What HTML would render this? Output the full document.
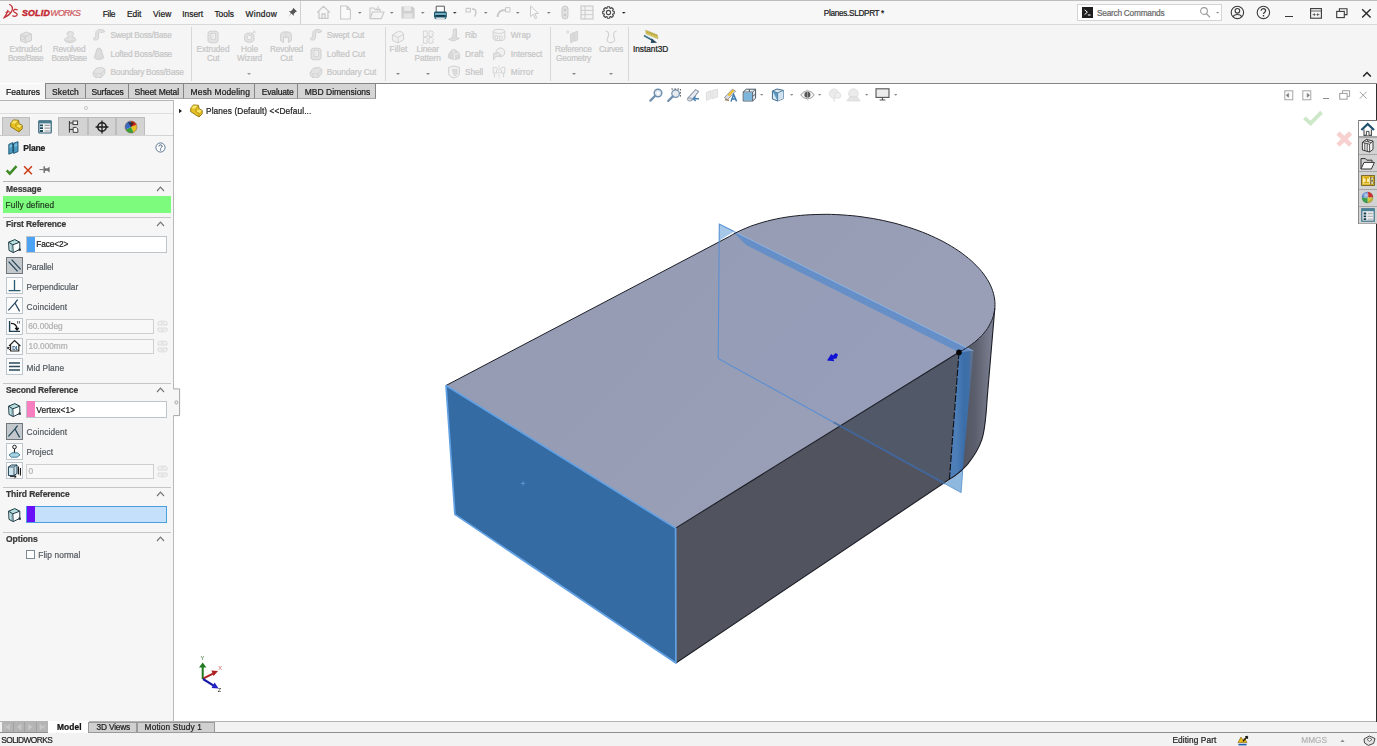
<!DOCTYPE html>
<html lang="en"><head><meta charset="utf-8"><title>Planes.SLDPRT - SOLIDWORKS</title>
<style>
html,body{margin:0;padding:0;background:#fff;}
body{width:1377px;height:746px;overflow:hidden;position:relative;font-family:"Liberation Sans",sans-serif;}
#app{position:absolute;left:0;top:0;width:1377px;height:746px;overflow:hidden;opacity:0.9999;}
.b{position:absolute;display:block;}
.t{position:absolute;white-space:nowrap;line-height:normal;display:block;-webkit-text-stroke:0.22px currentColor;}
</style></head>
<body><div id="app">
<div class="b" style="left:0.0px;top:0.0px;width:1377.0px;height:25.0px;background:#f7f7f7;"></div>
<div class="b" style="left:0.0px;top:0.0px;width:1377.0px;height:1.0px;background:#bdbdbd;"></div>
<div class="b" style="left:0.0px;top:24.0px;width:1377.0px;height:1.0px;background:#d9d9d9;"></div>
<svg class="b" style="left:3.0px;top:3.0px;" width="16" height="17" viewBox="0 0 16 17"><path d="M6.2 1.2 C8.5 2.2 10 4.2 9.2 7.0 C8.4 10 5.4 12.6 1.2 14.6 C3.2 11.6 4.6 9.2 5.0 6.8" fill="none" stroke="#c43038" stroke-width="1.25"/><path d="M2.6 9.6 C4.6 8.2 7.0 8.4 7.6 10.2" fill="none" stroke="#c43038" stroke-width="1.1"/><path d="M14.6 6.8 C12.6 5.8 10.4 6.4 10.6 8.2 C10.8 9.8 14.2 9.6 14.2 11.6 C14.2 13.4 11.4 13.8 9.4 12.6" fill="none" stroke="#c43038" stroke-width="1.3"/></svg>
<span class="t" id="t1" style="left:21.9px;top:8.34px;font-size:8.80px;color:#c3262f;letter-spacing:0.262px;font-weight:bold;font-style:italic;-webkit-text-stroke:0.45px #c3262f;">SOLID</span>
<span class="t" id="t2" style="left:50.3px;top:8.34px;font-size:8.80px;color:#cf5a60;letter-spacing:-0.667px;font-style:italic;">WORKS</span>
<span class="t" id="t3" style="left:102.7px;top:8.80px;font-size:8.40px;color:#1a1a1a;letter-spacing:-0.225px;">File</span>
<span class="t" id="t4" style="left:127.0px;top:8.80px;font-size:8.40px;color:#1a1a1a;letter-spacing:-0.059px;">Edit</span>
<span class="t" id="t5" style="left:153.0px;top:8.80px;font-size:8.40px;color:#1a1a1a;letter-spacing:0.071px;">View</span>
<span class="t" id="t6" style="left:182.3px;top:8.80px;font-size:8.40px;color:#1a1a1a;letter-spacing:-0.009px;">Insert</span>
<span class="t" id="t7" style="left:214.4px;top:8.80px;font-size:8.40px;color:#1a1a1a;letter-spacing:0.007px;">Tools</span>
<span class="t" id="t8" style="left:245.5px;top:8.80px;font-size:8.40px;color:#1a1a1a;letter-spacing:0.317px;">Window</span>
<svg class="b" style="left:287.0px;top:7.0px;" width="11" height="11" viewBox="0 0 11 11"><path d="M6.2 0.8 L10 4.6 L8.6 5 L6.6 7 L6.8 9 L4.4 6.6 L1 10 L4 6.2 L1.8 4 L3.8 4.2 L5.8 2.2 Z" fill="#555"/></svg>
<div class="b" style="left:300.0px;top:1.0px;width:1.0px;height:23.0px;background:#d0d0d0;"></div>
<svg class="b" style="left:316.0px;top:5.0px;" width="15" height="15" viewBox="0 0 15 15"><path d="M1 7.6 L7.5 1.4 L14 7.6 M3 6.6 V13.4 H12 V6.6 M6 13.4 V9 H9 V13.4" fill="none" stroke="#c9c9c9" stroke-width="1.3"/></svg>
<svg class="b" style="left:339.0px;top:5.0px;" width="13" height="15" viewBox="0 0 13 15"><path d="M1.6 1 H8 L11.4 4.4 V14 H1.6 Z M8 1 V4.4 H11.4" fill="#fafafa" stroke="#c9c9c9" stroke-width="1.1"/></svg>
<svg class="b" style="left:358.2px;top:11.6px;" width="3.6" height="2.3" viewBox="0 0 3.6 2.3"><path d="M0 0 H3.6 L1.8 1.8 Z" fill="#777"/></svg>
<svg class="b" style="left:369.0px;top:5.0px;" width="16" height="15" viewBox="0 0 16 15"><path d="M1 13.6 V3 H5 L6.4 4.6 H11 V7 M1 13.6 L3.6 7 H15 L12.4 13.6 Z" fill="#f4f4f4" stroke="#c9c9c9" stroke-width="1.1"/><path d="M9 1 V5 M7.4 3.6 L9 5.2 L10.6 3.6" fill="none" stroke="#c9c9c9" stroke-width="1"/></svg>
<svg class="b" style="left:390.2px;top:11.6px;" width="3.6" height="2.3" viewBox="0 0 3.6 2.3"><path d="M0 0 H3.6 L1.8 1.8 Z" fill="#777"/></svg>
<svg class="b" style="left:400.0px;top:5.0px;" width="16" height="15" viewBox="0 0 16 15"><path d="M1.4 1.4 H12.6 L14.6 3.4 V13.6 H1.4 Z" fill="#cfcfcf"/><rect x="4" y="1.4" width="7" height="4.6" fill="#e9e9e9"/><rect x="3.6" y="8.4" width="8.8" height="5.2" fill="#e4e4e4"/></svg>
<svg class="b" style="left:421.2px;top:11.6px;" width="3.6" height="2.3" viewBox="0 0 3.6 2.3"><path d="M0 0 H3.6 L1.8 1.8 Z" fill="#777"/></svg>
<svg class="b" style="left:432.5px;top:5.0px;" width="15" height="15" viewBox="0 0 15 15"><path d="M3.2 7 V1.2 H11.4 V7" fill="#fbfbfd" stroke="#5a5a5a" stroke-width="1"/><path d="M1 12.4 V8 C1 6.8 2 6.4 3 6.4 H11.6 C12.8 6.4 13.8 6.8 13.8 8 V12.4 Z" fill="#1d566c"/><path d="M2 9 H12.8" stroke="#a4dde6" stroke-width="1.3"/><path d="M3.4 10.8 H11.4" stroke="#0e3446" stroke-width="1.4"/><path d="M2.4 12.4 V14 M12.4 12.4 V14" stroke="#2a5a6c" stroke-width="1.4"/><path d="M2.4 14 H12.4" stroke="#9fb4bc" stroke-width="0.7"/></svg>
<svg class="b" style="left:453.2px;top:11.6px;" width="3.6" height="2.3" viewBox="0 0 3.6 2.3"><path d="M0 0 H3.6 L1.8 1.8 Z" fill="#333"/></svg>
<svg class="b" style="left:464.0px;top:6.0px;" width="15" height="13" viewBox="0 0 15 13"><path d="M2 2.4 H6.4 V6 M2 2.4 V6 H6.4" fill="none" stroke="#c9c9c9" stroke-width="1.1"/><path d="M8 3 C12 2.6 13.4 6.6 10.4 10.6" fill="none" stroke="#c9c9c9" stroke-width="1.5"/></svg>
<svg class="b" style="left:484.2px;top:11.6px;" width="3.6" height="2.3" viewBox="0 0 3.6 2.3"><path d="M0 0 H3.6 L1.8 1.8 Z" fill="#777"/></svg>
<svg class="b" style="left:496.0px;top:6.0px;" width="16" height="13" viewBox="0 0 16 13"><path d="M1.6 11 C1.6 5.4 6 3.4 10 4.4" fill="none" stroke="#c9c9c9" stroke-width="2"/><path d="M9.6 1.6 H14 V6 M9.6 1.6 V6 H14" fill="none" stroke="#c9c9c9" stroke-width="1"/></svg>
<svg class="b" style="left:516.2px;top:11.6px;" width="3.6" height="2.3" viewBox="0 0 3.6 2.3"><path d="M0 0 H3.6 L1.8 1.8 Z" fill="#777"/></svg>
<svg class="b" style="left:529.0px;top:5.0px;" width="11" height="15" viewBox="0 0 11 15"><path d="M1.6 1 L1.6 11.6 L4.2 9.2 L6.2 13.6 L7.8 12.8 L5.8 8.6 L9.4 8.4 Z" fill="#fafafa" stroke="#c9c9c9" stroke-width="1"/></svg>
<svg class="b" style="left:547.2px;top:11.6px;" width="3.6" height="2.3" viewBox="0 0 3.6 2.3"><path d="M0 0 H3.6 L1.8 1.8 Z" fill="#777"/></svg>
<svg class="b" style="left:561.0px;top:5.0px;" width="8" height="15" viewBox="0 0 8 15"><rect x="1" y="1" width="6" height="13" rx="3" fill="#e2e2e2" stroke="#c9c9c9" stroke-width="1"/><circle cx="4" cy="5" r="1.3" fill="#c9c9c9"/><circle cx="4" cy="10" r="1.3" fill="#c9c9c9"/></svg>
<svg class="b" style="left:580.0px;top:5.0px;" width="14" height="15" viewBox="0 0 14 15"><rect x="1" y="1" width="12" height="13" fill="#f3f3f3" stroke="#c9c9c9" stroke-width="1.1"/><path d="M5 1 V14 M1 5.4 H13 M1 9.6 H13" stroke="#c9c9c9" stroke-width="0.9"/></svg>
<svg class="b" style="left:601.3px;top:5.4px;" width="15" height="15" viewBox="0 0 15 15"><path d="M6.33 1.72 L8.67 1.72 L8.86 3.11 L9.65 3.43 L10.76 2.58 L12.42 4.24 L11.57 5.35 L11.89 6.14 L13.28 6.33 L13.28 8.67 L11.89 8.86 L11.57 9.65 L12.42 10.76 L10.76 12.42 L9.65 11.57 L8.86 11.89 L8.67 13.28 L6.33 13.28 L6.14 11.89 L5.35 11.57 L4.24 12.42 L2.58 10.76 L3.43 9.65 L3.11 8.86 L1.72 8.67 L1.72 6.33 L3.11 6.14 L3.43 5.35 L2.58 4.24 L4.24 2.58 L5.35 3.43 L6.14 3.11 Z" fill="none" stroke="#4a4a4a" stroke-width="1.15" stroke-linejoin="round"/><circle cx="7.5" cy="7.5" r="2.1" fill="none" stroke="#4a4a4a" stroke-width="1.1"/></svg>
<svg class="b" style="left:622.2px;top:11.6px;" width="3.6" height="2.3" viewBox="0 0 3.6 2.3"><path d="M0 0 H3.6 L1.8 1.8 Z" fill="#222"/></svg>
<span class="t" id="t9" style="left:823.8px;top:8.78px;font-size:8.20px;color:#1a1a1a;letter-spacing:-0.305px;">Planes.SLDPRT *</span>
<div class="b" style="left:1077.0px;top:4.0px;width:145.0px;height:17.0px;background:#fff;border:1px solid #d4d4d4;box-sizing:border-box;"></div>
<div class="b" style="left:1082.0px;top:7.0px;width:11.0px;height:10.5px;background:#1e1e1e;"></div>
<svg class="b" style="left:1082.0px;top:7.0px;" width="11" height="10.5" viewBox="0 0 11 10.5"><path d="M2.6 2.8 L5.4 5.2 L2.6 7.6 M5.8 8 H8.6" fill="none" stroke="#fff" stroke-width="1"/></svg>
<span class="t" id="t10" style="left:1097.0px;top:8.09px;font-size:8.30px;color:#6a6a6a;letter-spacing:-0.248px;">Search Commands</span>
<svg class="b" style="left:1199.0px;top:6.0px;" width="13" height="13" viewBox="0 0 13 13"><circle cx="5" cy="5" r="3.4" fill="none" stroke="#9a9a9a" stroke-width="1.1"/><path d="M7.4 7.6 L11 11.4" stroke="#9a9a9a" stroke-width="1.3"/></svg>
<svg class="b" style="left:1215.7px;top:11.5px;" width="3.2" height="2.1" viewBox="0 0 3.2 2.1"><path d="M0 0 H3.2 L1.6 1.6 Z" fill="#8a8a8a"/></svg>
<svg class="b" style="left:1230.0px;top:5.4px;" width="15" height="15" viewBox="0 0 15 15"><circle cx="7.4" cy="7.4" r="6.2" fill="none" stroke="#3c3c3c" stroke-width="1.1"/><circle cx="7.4" cy="5.8" r="2.3" fill="none" stroke="#3c3c3c" stroke-width="1.1"/><path d="M3.2 11.8 C4 8.8 10.8 8.8 11.6 11.8" fill="none" stroke="#3c3c3c" stroke-width="1.1"/></svg>
<svg class="b" style="left:1255.8px;top:5.4px;" width="15" height="15" viewBox="0 0 15 15"><circle cx="7.4" cy="7.4" r="6.2" fill="none" stroke="#3c3c3c" stroke-width="1.1"/><path d="M5.2 5.8 C5.2 3 9.8 3 9.6 5.8 C9.5 7.2 7.5 7.2 7.5 9" fill="none" stroke="#3c3c3c" stroke-width="1.3"/><rect x="6.8" y="10" width="1.4" height="1.5" fill="#3c3c3c"/></svg>
<div class="b" style="left:1285.0px;top:16.0px;width:8.0px;height:1.4px;background:#3a3a3a;"></div>
<svg class="b" style="left:1309.5px;top:7.5px;" width="12" height="11" viewBox="0 0 12 11"><rect x="0.6" y="0.6" width="10.8" height="9.6" fill="none" stroke="#3a3a3a" stroke-width="1.1"/><path d="M0.6 3 H11.4" stroke="#3a3a3a" stroke-width="0.8"/><path d="M2.6 6.6 H5.2 M3.8 5.4 L5.2 6.6 L3.8 7.8 M9.4 6.6 H6.8 M8.2 5.4 L6.8 6.6 L8.2 7.8" fill="none" stroke="#3a3a3a" stroke-width="0.8"/></svg>
<svg class="b" style="left:1335.5px;top:7.5px;" width="12" height="11" viewBox="0 0 12 11"><path d="M3.4 3 V0.7 H11 V6.6 H8.4" fill="none" stroke="#3a3a3a" stroke-width="1.1"/><rect x="0.7" y="3.4" width="7.6" height="6.2" fill="none" stroke="#3a3a3a" stroke-width="1.1"/></svg>
<svg class="b" style="left:1360.5px;top:8.0px;" width="11" height="11" viewBox="0 0 11 11"><path d="M1.2 1.2 L9.6 9.6 M9.6 1.2 L1.2 9.6" stroke="#2a2a2a" stroke-width="1.4"/></svg>
<div class="b" style="left:0.0px;top:25.0px;width:1377.0px;height:58.0px;background:#f5f5f5;"></div>
<div class="b" style="left:45.5px;top:83.0px;width:1331.5px;height:1.0px;background:#858585;"></div>
<div class="b" style="left:191.0px;top:26.5px;width:1.2px;height:54.5px;background:#d8d8d8;"></div>
<div class="b" style="left:384.5px;top:26.5px;width:1.2px;height:54.5px;background:#d8d8d8;"></div>
<div class="b" style="left:550.0px;top:26.5px;width:1.2px;height:54.5px;background:#d8d8d8;"></div>
<div class="b" style="left:627.5px;top:26.5px;width:1.2px;height:54.5px;background:#d8d8d8;"></div>
<svg class="b" style="left:19.0px;top:29.5px;" width="14" height="14" viewBox="0 0 14 14"><path d="M1.5 4.5 L7.5 2 L12.5 4 V10.5 L6.5 12.8 L1.5 10.8 Z" fill="#e3e3e3" stroke="#d0d0d0" stroke-width="1"/><path d="M1.5 4.5 L6.5 6.4 L12.5 4 M6.5 6.4 V12.8" fill="none" stroke="#d0d0d0" stroke-width="0.9"/><rect x="3" y="6.6" width="2.4" height="3" fill="none" stroke="#d0d0d0" stroke-width="0.7"/></svg>
<span class="t" id="t11" style="left:9.5px;top:44.29px;font-size:8.30px;color:#c6c6c6;letter-spacing:-0.077px;">Extruded</span>
<span class="t" id="t12" style="left:8.1px;top:53.49px;font-size:8.30px;color:#c6c6c6;letter-spacing:-0.519px;">Boss/Base</span>
<svg class="b" style="left:62.5px;top:29.5px;" width="14" height="14" viewBox="0 0 14 14"><path d="M4 3.4 C4 1 10.6 1 10.6 3.6 C10.6 5.2 8.6 5.6 8.8 6.6 C12.4 7 13 9 12.4 10.4 C11.4 13 3 13.4 1.6 10.6 C1 9 2.6 7.6 5.6 7.2 C5.8 6 4 5.2 4 3.4 Z" fill="#e3e3e3" stroke="#d0d0d0" stroke-width="1"/><path d="M2.6 10.2 C5 11.6 9.6 11.4 11.6 9.8" fill="none" stroke="#d0d0d0" stroke-width="0.8"/></svg>
<span class="t" id="t13" style="left:52.7px;top:44.29px;font-size:8.30px;color:#c6c6c6;letter-spacing:-0.249px;">Revolved</span>
<span class="t" id="t14" style="left:51.5px;top:53.49px;font-size:8.30px;color:#c6c6c6;letter-spacing:-0.519px;">Boss/Base</span>
<svg class="b" style="left:92.0px;top:28.0px;" width="14" height="14" viewBox="0 0 14 14"><path d="M1.4 10.4 C1.4 12.8 6.6 12.8 6.6 9.4 V5 C6.6 3.6 8.6 3.4 9 4.6 L12.6 3.8 C12.2 0.4 4 0.6 3.8 4.8 V9 C3.8 10 2.8 10 2.6 9.2 Z" fill="#e3e3e3" stroke="#d0d0d0" stroke-width="1"/></svg>
<span class="t" id="t15" style="left:110.6px;top:30.19px;font-size:8.30px;color:#c6c6c6;letter-spacing:-0.275px;">Swept Boss/Base</span>
<svg class="b" style="left:92.0px;top:46.5px;" width="14" height="14" viewBox="0 0 14 14"><path d="M5 2.2 C5 1 9 1 9 2.2 L11.6 10.4 C11.6 13 2.4 13 2.4 10.4 Z" fill="#dcdcdc" stroke="#d0d0d0" stroke-width="1"/><ellipse cx="7" cy="2.3" rx="2" ry="0.9" fill="#e3e3e3" stroke="#d0d0d0" stroke-width="0.7"/></svg>
<span class="t" id="t16" style="left:110.6px;top:48.69px;font-size:8.30px;color:#c6c6c6;letter-spacing:-0.228px;">Lofted Boss/Base</span>
<svg class="b" style="left:92.0px;top:65.0px;" width="14" height="14" viewBox="0 0 14 14"><path d="M1.2 7.2 L4 3.6 C5.6 2 8 3.6 9.6 2.2 L12.8 4.4 V8.6 L9.4 12.2 C7.4 13.2 5.6 11.4 4 12.6 L1.2 10.6 Z" fill="#e3e3e3" stroke="#d0d0d0" stroke-width="1"/><path d="M1.2 7.2 L4 9 C5.8 7.8 7.6 9.6 9.4 8.4 L12.8 4.4 M9.4 8.4 V12.2 M4 9 V12.6" fill="none" stroke="#d0d0d0" stroke-width="0.8"/></svg>
<span class="t" id="t17" style="left:110.6px;top:67.19px;font-size:8.30px;color:#c6c6c6;letter-spacing:-0.255px;">Boundary Boss/Base</span>
<svg class="b" style="left:206.0px;top:29.5px;" width="14" height="14" viewBox="0 0 14 14"><path d="M2 2.6 L4 1.2 H10 L12 2.6 V11.4 L10 12.8 H4 L2 11.4 Z" fill="#e3e3e3" stroke="#d0d0d0" stroke-width="1"/><rect x="5" y="3.6" width="4.4" height="5.6" fill="#f6f6f6" stroke="#d0d0d0" stroke-width="0.9"/><path d="M7 5 V8" stroke="#d0d0d0" stroke-width="0.8"/></svg>
<span class="t" id="t18" style="left:196.5px;top:44.29px;font-size:8.30px;color:#c6c6c6;letter-spacing:-0.027px;">Extruded</span>
<span class="t" id="t19" style="left:206.9px;top:53.49px;font-size:8.30px;color:#c6c6c6;letter-spacing:-0.107px;">Cut</span>
<svg class="b" style="left:243.0px;top:29.5px;" width="14" height="14" viewBox="0 0 14 14"><path d="M1.6 5.6 C1.6 2.2 11 2.2 11 5.6 V9.6 C11 13.2 1.6 13.2 1.6 9.6 Z" fill="#e3e3e3" stroke="#d0d0d0" stroke-width="1"/><circle cx="6.3" cy="7.4" r="2.2" fill="#f6f6f6" stroke="#d0d0d0" stroke-width="0.9"/><path d="M8.4 4.4 L12.4 0.8 M10.4 1 L12.6 3" stroke="#d0d0d0" stroke-width="1"/></svg>
<span class="t" id="t20" style="left:241.0px;top:44.29px;font-size:8.30px;color:#c6c6c6;letter-spacing:-0.020px;">Hole</span>
<span class="t" id="t21" style="left:237.0px;top:53.49px;font-size:8.30px;color:#c6c6c6;letter-spacing:-0.138px;">Wizard</span>
<svg class="b" style="left:247.0px;top:72.8px;" width="4" height="2.5" viewBox="0 0 4 2.5"><path d="M0 0 H4 L2 2 Z" fill="#9a9a9a"/></svg>
<svg class="b" style="left:279.0px;top:29.5px;" width="14" height="14" viewBox="0 0 14 14"><path d="M1.6 4.4 C1.6 1 12.4 1 12.4 4.4 V10.6 L9.4 12.6 V6.4 L7 8 L4.6 6.4 V12.6 L1.6 10.6 Z" fill="#e3e3e3" stroke="#d0d0d0" stroke-width="1"/><path d="M7 2.4 V8" stroke="#d0d0d0" stroke-width="0.8"/></svg>
<span class="t" id="t22" style="left:270.0px;top:44.29px;font-size:8.30px;color:#c6c6c6;letter-spacing:-0.199px;">Revolved</span>
<span class="t" id="t23" style="left:280.2px;top:53.49px;font-size:8.30px;color:#c6c6c6;letter-spacing:-0.107px;">Cut</span>
<svg class="b" style="left:308.5px;top:28.0px;" width="14" height="14" viewBox="0 0 14 14"><path d="M1.4 10.4 C1.4 12.8 6.6 12.8 6.6 9.4 V5 C6.6 3.6 8.6 3.4 9 4.6 L12.6 3.8 C12.2 0.4 4 0.6 3.8 4.8 V9 C3.8 10 2.8 10 2.6 9.2 Z" fill="#e3e3e3" stroke="#d0d0d0" stroke-width="1"/></svg>
<span class="t" id="t24" style="left:326.8px;top:30.19px;font-size:8.30px;color:#c6c6c6;letter-spacing:-0.087px;">Swept Cut</span>
<svg class="b" style="left:308.5px;top:46.5px;" width="14" height="14" viewBox="0 0 14 14"><path d="M2 2.6 L4 1.2 H10 L12 2.6 V11.4 L10 12.8 H4 L2 11.4 Z" fill="#e3e3e3" stroke="#d0d0d0" stroke-width="1"/><rect x="5" y="3.6" width="4.4" height="5.6" fill="#f6f6f6" stroke="#d0d0d0" stroke-width="0.9"/><path d="M7 5 V8" stroke="#d0d0d0" stroke-width="0.8"/></svg>
<span class="t" id="t25" style="left:326.8px;top:48.69px;font-size:8.30px;color:#c6c6c6;letter-spacing:-0.010px;">Lofted Cut</span>
<svg class="b" style="left:308.5px;top:65.0px;" width="14" height="14" viewBox="0 0 14 14"><path d="M1.2 7.2 L4 3.6 C5.6 2 8 3.6 9.6 2.2 L12.8 4.4 V8.6 L9.4 12.2 C7.4 13.2 5.6 11.4 4 12.6 L1.2 10.6 Z" fill="#e3e3e3" stroke="#d0d0d0" stroke-width="1"/><path d="M1.2 7.2 L4 9 C5.8 7.8 7.6 9.6 9.4 8.4 L12.8 4.4 M9.4 8.4 V12.2 M4 9 V12.6" fill="none" stroke="#d0d0d0" stroke-width="0.8"/></svg>
<span class="t" id="t26" style="left:326.8px;top:67.19px;font-size:8.30px;color:#c6c6c6;letter-spacing:-0.103px;">Boundary Cut</span>
<svg class="b" style="left:391.0px;top:29.5px;" width="14" height="14" viewBox="0 0 14 14"><path d="M1.4 5 L6.4 1.8 C9 0.8 12 2 12.6 4.4 V9.6 L7 13 L1.4 10.4 Z" fill="#f1f1f1" stroke="#d0d0d0" stroke-width="1"/><path d="M1.4 5 L7 7.4 L12.6 4.4 M7 7.4 V13" fill="none" stroke="#d0d0d0" stroke-width="0.9"/></svg>
<span class="t" id="t27" style="left:389.5px;top:44.29px;font-size:8.30px;color:#c6c6c6;letter-spacing:0.078px;">Fillet</span>
<svg class="b" style="left:396.3px;top:72.8px;" width="4" height="2.5" viewBox="0 0 4 2.5"><path d="M0 0 H4 L2 2 Z" fill="#8a8a8a"/></svg>
<svg class="b" style="left:420.5px;top:29.5px;" width="14" height="14" viewBox="0 0 14 14"><path d="M2.4 1 h3 l1.6 1.6 l-1.6 1.6 l1.6 1.4 l-1.6 1 h-3 Z" fill="#f4f4f4" stroke="#d0d0d0" stroke-width="0.9"/><path d="M8 1 h3 l1.6 1.6 l-1.6 1.6 l1.6 1.4 l-1.6 1 h-3 Z" fill="#f4f4f4" stroke="#d0d0d0" stroke-width="0.9"/><path d="M2.4 7.6 h3 l1.6 1.6 l-1.6 1.6 l1.6 1.4 l-1.6 1 h-3 Z" fill="#f4f4f4" stroke="#d0d0d0" stroke-width="0.9"/><path d="M8 7.6 h3 l1.6 1.6 l-1.6 1.6 l1.6 1.4 l-1.6 1 h-3 Z" fill="#f4f4f4" stroke="#d0d0d0" stroke-width="0.9"/></svg>
<span class="t" id="t28" style="left:416.4px;top:44.29px;font-size:8.30px;color:#c6c6c6;letter-spacing:-0.096px;">Linear</span>
<span class="t" id="t29" style="left:414.4px;top:53.49px;font-size:8.30px;color:#c6c6c6;letter-spacing:-0.038px;">Pattern</span>
<svg class="b" style="left:425.7px;top:72.8px;" width="4" height="2.5" viewBox="0 0 4 2.5"><path d="M0 0 H4 L2 2 Z" fill="#8a8a8a"/></svg>
<svg class="b" style="left:446.5px;top:28.0px;" width="14" height="14" viewBox="0 0 14 14"><path d="M6.4 1.4 L9.4 0.8 V9.6 L12.4 10.4 L6.4 13 L1.6 11.4 L4.6 10.2 C6 9 6.4 6 6.4 1.4 Z" fill="#e3e3e3" stroke="#d0d0d0" stroke-width="1"/><path d="M4.6 10.2 L7.6 11 C8.6 8.6 9.2 5 9.4 0.8" fill="none" stroke="#d0d0d0" stroke-width="0.8"/></svg>
<span class="t" id="t30" style="left:465.0px;top:30.19px;font-size:8.30px;color:#c6c6c6;letter-spacing:-0.284px;">Rib</span>
<svg class="b" style="left:446.5px;top:46.5px;" width="14" height="14" viewBox="0 0 14 14"><path d="M1.4 7.6 L5.6 2 L9 3.4 L12.6 6.4 V11.4 L7.4 12.6 L1.4 10.8 Z" fill="#d9d9d9" stroke="#d0d0d0" stroke-width="1"/><path d="M7.4 7.4 L12.6 6.4 M7.4 7.4 V12.6 M7.4 7.4 L5.6 2" fill="none" stroke="#f0f0f0" stroke-width="0.9"/></svg>
<span class="t" id="t31" style="left:465.0px;top:48.69px;font-size:8.30px;color:#c6c6c6;letter-spacing:0.063px;">Draft</span>
<svg class="b" style="left:446.5px;top:65.0px;" width="14" height="14" viewBox="0 0 14 14"><path d="M1.6 2.4 L7 1 L12.4 2.4 V8.4 C12.4 11 9 12.6 7 13 C4.4 12.4 1.6 11 1.6 8.4 Z" fill="#f1f1f1" stroke="#d0d0d0" stroke-width="1"/><path d="M5.4 4.4 H10 V8.6 C9.6 10 8.4 10.6 7.4 10.8 Z" fill="#dcdcdc" stroke="#d0d0d0" stroke-width="0.8"/></svg>
<span class="t" id="t32" style="left:465.0px;top:67.19px;font-size:8.30px;color:#c6c6c6;letter-spacing:-0.091px;">Shell</span>
<svg class="b" style="left:492.0px;top:28.0px;" width="14" height="14" viewBox="0 0 14 14"><path d="M1.2 3.4 C1.2 0.6 12.8 0.6 12.8 3.4 V10.6 C12.8 13.4 1.2 13.4 1.2 10.6 Z" fill="#f3f3f3" stroke="#d0d0d0" stroke-width="1"/><path d="M1.2 3.4 C1.2 6 12.8 6 12.8 3.4" fill="none" stroke="#d0d0d0" stroke-width="0.9"/><path d="M3 7.6 H5.6 V11 H3 Z M7.4 8 H9 C11 8 11 11.2 9 11.2 H7.4 Z" fill="none" stroke="#d0d0d0" stroke-width="0.9"/></svg>
<span class="t" id="t33" style="left:510.8px;top:30.19px;font-size:8.30px;color:#c6c6c6;letter-spacing:0.078px;">Wrap</span>
<svg class="b" style="left:492.0px;top:46.5px;" width="14" height="14" viewBox="0 0 14 14"><circle cx="8.4" cy="5.4" r="4.4" fill="#f1f1f1" stroke="#d0d0d0" stroke-width="1"/><path d="M1.4 6.6 L6.6 5.4 L9.4 8.4 L3.4 9.8 L1.6 13 Z" fill="#e3e3e3" stroke="#d0d0d0" stroke-width="0.9"/></svg>
<span class="t" id="t34" style="left:510.8px;top:48.69px;font-size:8.30px;color:#c6c6c6;letter-spacing:-0.036px;">Intersect</span>
<svg class="b" style="left:492.0px;top:65.0px;" width="14" height="14" viewBox="0 0 14 14"><path d="M7 0.6 V13.4" stroke="#d0d0d0" stroke-width="0.9" stroke-dasharray="2 1"/><path d="M1.2 2.4 H4.2 L5.6 4.2 L4.2 6 L5.4 8 H1.2 Z M12.8 2.4 H9.8 L8.4 4.2 L9.8 6 L8.6 8 H12.8 Z" fill="#f4f4f4" stroke="#d0d0d0" stroke-width="0.9"/><path d="M2.4 8 V12.4 M11.6 8 V12.4" stroke="#d0d0d0" stroke-width="0.9"/></svg>
<span class="t" id="t35" style="left:510.8px;top:67.19px;font-size:8.30px;color:#c6c6c6;letter-spacing:0.188px;">Mirror</span>
<svg class="b" style="left:566.0px;top:29.5px;" width="14" height="14" viewBox="0 0 14 14"><circle cx="1.8" cy="2" r="1.1" fill="none" stroke="#d0d0d0" stroke-width="0.8"/><path d="M4.6 4 L7.4 2.6 V11.4 L4.6 12.8 Z M8.6 2.4 L11.6 1.2 V10 L8.6 11.2 Z" fill="#dcdcdc" stroke="#d0d0d0" stroke-width="0.9"/></svg>
<span class="t" id="t36" style="left:555.0px;top:44.29px;font-size:8.30px;color:#c6c6c6;letter-spacing:-0.187px;">Reference</span>
<span class="t" id="t37" style="left:556.0px;top:53.49px;font-size:8.30px;color:#c6c6c6;letter-spacing:-0.180px;">Geometry</span>
<svg class="b" style="left:571.5px;top:72.8px;" width="4" height="2.5" viewBox="0 0 4 2.5"><path d="M0 0 H4 L2 2 Z" fill="#8a8a8a"/></svg>
<svg class="b" style="left:603.5px;top:29.5px;" width="14" height="14" viewBox="0 0 14 14"><path d="M1.6 1 C5.6 1.6 5 5.4 3.6 8 C2 11 4.4 12.8 7 12.6 C9.8 12.4 11.6 10.8 10.2 8 C9 5.4 9 1.6 12.6 1" fill="none" stroke="#d0d0d0" stroke-width="1.1"/></svg>
<span class="t" id="t38" style="left:599.0px;top:44.29px;font-size:8.30px;color:#c6c6c6;letter-spacing:-0.380px;">Curves</span>
<svg class="b" style="left:608.5px;top:72.8px;" width="4" height="2.5" viewBox="0 0 4 2.5"><path d="M0 0 H4 L2 2 Z" fill="#8a8a8a"/></svg>
<svg class="b" style="left:640.0px;top:28.0px;" width="22" height="18" viewBox="640 28 22 18"><path d="M645.7 30.2 L657.4 34.9 L657.9 38.8 L646.1 33.8 Z" fill="#dccb5c" stroke="#a89a38" stroke-width="0.5"/><path d="M648 31.4 v1.8 M650 32.2 v1.8 M652 33 v1.8 M654 33.8 v1.8 M656 34.6 v1.8" stroke="#7a6c1c" stroke-width="0.6"/><path d="M644 35.6 L653 40.4" stroke="#2c5c74" stroke-width="1.7"/><path d="M644.2 35.2 L652.6 39.4" stroke="#8cc4dc" stroke-width="0.6"/><path d="M651.6 38.6 L657.2 42.8 L650.8 43 Z" fill="#23485c"/></svg>
<span class="t" id="t39" style="left:633.0px;top:44.39px;font-size:8.30px;color:#222;letter-spacing:-0.024px;">Instant3D</span>
<svg class="b" style="left:1362.0px;top:70.5px;" width="10" height="7" viewBox="0 0 10 7"><path d="M1.2 5.6 L5 1.6 L8.8 5.6" fill="none" stroke="#222" stroke-width="1.5"/></svg>
<div class="b" style="left:0.0px;top:84.0px;width:45.5px;height:16.0px;background:#f7f7f7;"></div>
<div class="b" style="left:45.0px;top:83.0px;width:1.0px;height:16.4px;background:#858585;"></div>
<span class="t" id="t40" style="left:6.0px;top:86.61px;font-size:8.50px;color:#111;letter-spacing:0.082px;">Features</span>
<div class="b" style="left:45.5px;top:84.0px;width:40.0px;height:15.4px;background:#d5d5d5;border-right:1px solid #858585;border-bottom:1px solid #a8a8a8;box-sizing:border-box;"></div>
<span class="t" id="t41" style="left:52.0px;top:86.61px;font-size:8.50px;color:#1a1a1a;letter-spacing:0.167px;">Sketch</span>
<div class="b" style="left:85.5px;top:84.0px;width:43.0px;height:15.4px;background:#d5d5d5;border-right:1px solid #858585;border-bottom:1px solid #a8a8a8;box-sizing:border-box;"></div>
<span class="t" id="t42" style="left:91.5px;top:86.61px;font-size:8.50px;color:#1a1a1a;letter-spacing:-0.193px;">Surfaces</span>
<div class="b" style="left:128.5px;top:84.0px;width:55.8px;height:15.4px;background:#d5d5d5;border-right:1px solid #858585;border-bottom:1px solid #a8a8a8;box-sizing:border-box;"></div>
<span class="t" id="t43" style="left:134.6px;top:86.61px;font-size:8.50px;color:#1a1a1a;letter-spacing:-0.089px;">Sheet Metal</span>
<div class="b" style="left:184.3px;top:84.0px;width:71.1px;height:15.4px;background:#d5d5d5;border-right:1px solid #858585;border-bottom:1px solid #a8a8a8;box-sizing:border-box;"></div>
<span class="t" id="t44" style="left:190.6px;top:86.61px;font-size:8.50px;color:#1a1a1a;letter-spacing:0.135px;">Mesh Modeling</span>
<div class="b" style="left:255.4px;top:84.0px;width:42.9px;height:15.4px;background:#d5d5d5;border-right:1px solid #858585;border-bottom:1px solid #a8a8a8;box-sizing:border-box;"></div>
<span class="t" id="t45" style="left:261.8px;top:86.61px;font-size:8.50px;color:#1a1a1a;letter-spacing:-0.174px;">Evaluate</span>
<div class="b" style="left:298.3px;top:84.0px;width:77.3px;height:15.4px;background:#d5d5d5;border-right:1px solid #858585;border-bottom:1px solid #a8a8a8;box-sizing:border-box;"></div>
<span class="t" id="t46" style="left:304.8px;top:86.61px;font-size:8.50px;color:#1a1a1a;letter-spacing:-0.011px;">MBD Dimensions</span>
<div class="b" style="left:0.0px;top:100.0px;width:173.0px;height:621.0px;background:#f6f6f6;"></div>
<div class="b" style="left:0.0px;top:100.0px;width:173.5px;height:1.0px;background:#b5b5b5;"></div>
<div class="b" style="left:173.0px;top:100.0px;width:1.0px;height:621.0px;background:#b9b9b9;"></div>
<svg class="b" style="left:83.0px;top:105.0px;" width="6" height="6" viewBox="0 0 6 6"><circle cx="3" cy="3" r="1.6" fill="none" stroke="#c2c2c2" stroke-width="0.9"/></svg>
<div class="b" style="left:0.0px;top:113.0px;width:173.0px;height:1.0px;background:#dedede;"></div>
<div class="b" style="left:1.5px;top:117.0px;width:28.3px;height:18.5px;background:#d3d3d3;border:1px solid #bdbdbd;box-sizing:border-box;"></div>
<div class="b" style="left:58.4px;top:117.0px;width:29.2px;height:18.5px;background:#d3d3d3;border:1px solid #bdbdbd;box-sizing:border-box;"></div>
<div class="b" style="left:87.6px;top:117.0px;width:28.0px;height:18.5px;background:#d3d3d3;border:1px solid #bdbdbd;box-sizing:border-box;"></div>
<div class="b" style="left:115.6px;top:117.0px;width:29.4px;height:18.5px;background:#d3d3d3;border:1px solid #bdbdbd;box-sizing:border-box;"></div>
<div class="b" style="left:0.0px;top:135.0px;width:30.0px;height:1.0px;background:#c8c8c8;"></div>
<div class="b" style="left:58.0px;top:135.0px;width:115.0px;height:1.0px;background:#d4d4d4;"></div>
<svg class="b" style="left:9.6px;top:119.0px;" width="13" height="14" viewBox="0 0 13 14"><path d="M0.8 4.2 L3.4 0.9 L8.4 1.3 L9.2 4.9 L12.2 6.3 V9.8 L9 13 L0.6 7.6 Z" fill="#e6c022" stroke="#8a6e0c" stroke-width="0.9" stroke-linejoin="round"/><path d="M1.2 4.3 L3.5 1.4 L8 1.7 L5.9 4.8 Z" fill="#f8e463"/><path d="M5.9 7.6 L9 5.4 L11.8 6.6 L9 9.2 Z" fill="#f8e463"/><path d="M5.9 4.8 V7.6 L9 9.2 V12.6 M5.9 4.8 L8.4 1.5" fill="none" stroke="#a8860e" stroke-width="0.7"/></svg>
<svg class="b" style="left:37.6px;top:119.6px;" width="14" height="14" viewBox="0 0 14 14"><rect x="0.8" y="0.8" width="12.4" height="12.2" rx="0.8" fill="#f2f6f8" stroke="#2f5f74" stroke-width="1.2"/><rect x="0.8" y="0.8" width="12.4" height="2.6" fill="#4a7c90"/><path d="M1.8 4.4 h3.2 v1.9 h-3.2 Z M1.8 7.2 h3.2 v1.9 h-3.2 Z M1.8 10 h3.2 v1.9 h-3.2 Z" fill="#1f4a5c"/><path d="M6.6 5.4 H11.8 M6.6 8.2 H11.8 M6.6 11 H11.8" stroke="#9c9c9c" stroke-width="1.2"/></svg>
<svg class="b" style="left:66.5px;top:119.5px;" width="13" height="14" viewBox="0 0 13 14"><path d="M2.4 1 V12.6 M2.4 3 H6 M2.4 9.4 H6" fill="none" stroke="#333" stroke-width="1"/><rect x="6" y="1" width="4.6" height="3.6" fill="#f6f6f6" stroke="#333" stroke-width="0.9"/><path d="M6.2 7.4 h3 l1.6 1.6 v3.4 h-4.6 Z" fill="#f6f6f6" stroke="#333" stroke-width="0.9"/></svg>
<svg class="b" style="left:94.5px;top:119.5px;" width="14" height="14" viewBox="0 0 14 14"><circle cx="7" cy="7" r="4.2" fill="none" stroke="#1c1c1c" stroke-width="1.5"/><path d="M7 0.6 V13.4 M0.6 7 H13.4" stroke="#1c1c1c" stroke-width="1.3"/></svg>
<svg class="b" style="left:123.5px;top:119.5px;" width="14" height="14" viewBox="0 0 14 14"><circle cx="7" cy="7" r="6" fill="#e8e8e8"/><path d="M7 7 L7 1 A6 6 0 0 1 12.6 5 Z" fill="#d02818"/><path d="M7 7 L12.6 5 A6 6 0 0 1 9.6 12.4 Z" fill="#e8c020"/><path d="M7 7 L9.6 12.4 A6 6 0 0 1 1.6 9.6 Z" fill="#38a038"/><path d="M7 7 L1.6 9.6 A6 6 0 0 1 7 1 Z" fill="#3868c8"/><path d="M7 7 L4 2.2 L10.4 2.4 Z" fill="#222" opacity="0.75"/><circle cx="7" cy="7" r="6" fill="none" stroke="#8a6a50" stroke-width="0.6"/></svg>
<svg class="b" style="left:7.6px;top:140.6px;" width="11" height="14" viewBox="0 0 11 14"><path d="M0.8 3.4 L4.8 1.6 V11.6 L0.8 13.2 Z" fill="#4b9cc4" stroke="#1b5272" stroke-width="0.9" stroke-linejoin="round"/><path d="M5.6 2.2 L10 0.7 V10.6 L5.6 12.4 Z" fill="#4b9cc4" stroke="#1b5272" stroke-width="0.9" stroke-linejoin="round"/><path d="M1.6 4.2 L4 3.2 V6 L1.6 7 Z M6.4 3.2 L9.2 2.2 V5 L6.4 6 Z" fill="#8cc8e0" opacity="0.7"/><path d="M5.2 3 V11.4" stroke="#0e3850" stroke-width="0.9" stroke-dasharray="1.6 1"/></svg>
<span class="t" id="t47" style="left:23.3px;top:143.02px;font-size:8.60px;color:#222;letter-spacing:-0.207px;font-weight:bold;">Plane</span>
<svg class="b" style="left:155.0px;top:142.4px;" width="11" height="11" viewBox="0 0 11 11"><circle cx="5.5" cy="5.5" r="4.6" fill="#fff" stroke="#4a6a8a" stroke-width="0.9"/><path d="M3.9 4.4 C3.9 2.4 7.2 2.4 7.1 4.4 C7 5.4 5.6 5.4 5.6 6.6" fill="none" stroke="#34526e" stroke-width="1"/><rect x="5" y="7.4" width="1.1" height="1.1" fill="#34526e"/></svg>
<svg class="b" style="left:5.0px;top:163.5px;" width="14" height="12" viewBox="0 0 14 12"><path d="M1.7 6.4 L4.8 9.6 L11.5 2.2" fill="none" stroke="#3f8a24" stroke-width="2.5"/></svg>
<svg class="b" style="left:23.0px;top:164.6px;" width="10" height="10" viewBox="0 0 10 10"><path d="M1.1 1.3 L8.9 9.2 M8.9 1.3 L1.1 9.2" stroke="#cc3c14" stroke-width="1.5"/></svg>
<svg class="b" style="left:38.5px;top:165.0px;" width="12" height="9.4" viewBox="0 0 12 9.4"><path d="M0.4 4.6 H5.2" stroke="#7a7a7a" stroke-width="1.1"/><path d="M5.2 1.2 V8" stroke="#6e6e6e" stroke-width="1.4"/><path d="M5.6 3 L8 3.6 L10.6 1.7 V7.5 L8 5.6 L5.6 6.2 Z" fill="#707070"/></svg>
<div class="b" style="left:3.0px;top:181.0px;width:167.5px;height:1.0px;background:#b4b4b4;"></div>
<span class="t" id="t48" style="left:6.0px;top:183.51px;font-size:8.50px;color:#3a3a3a;letter-spacing:-0.089px;font-weight:bold;">Message</span>
<svg class="b" style="left:156.0px;top:185.6px;" width="9" height="6" viewBox="0 0 9 6"><path d="M1 5 L4.5 1.2 L8 5" fill="none" stroke="#777" stroke-width="1.2"/></svg>
<div class="b" style="left:3.0px;top:196.0px;width:167.5px;height:17.0px;background:#7dfb7d;"></div>
<span class="t" id="t49" style="left:5.6px;top:199.79px;font-size:8.30px;color:#1f3a1f;letter-spacing:0.119px;">Fully defined</span>
<div class="b" style="left:3.0px;top:217.0px;width:167.5px;height:1.0px;background:#c6c6c6;"></div>
<span class="t" id="t50" style="left:6.0px;top:219.21px;font-size:8.50px;color:#3a3a3a;letter-spacing:-0.126px;font-weight:bold;">First Reference</span>
<svg class="b" style="left:156.0px;top:221.4px;" width="9" height="6" viewBox="0 0 9 6"><path d="M1 5 L4.5 1.2 L8 5" fill="none" stroke="#777" stroke-width="1.2"/></svg>
<svg class="b" style="left:7.8px;top:238.8px;" width="14" height="15" viewBox="0 0 14 15"><path d="M0.6 3.2 L6.8 0.6 L11.8 3.2 L4.8 5.8 Z" fill="#b9dede"/><path d="M0.6 3.2 L4.8 5.8 L5.2 13.6 L1 11.4 Z" fill="#dceff0"/><path d="M2.4 4.6 L3.8 5.4 L4.2 12.8 L2.8 12 Z" fill="#8cc4c8"/><path d="M4.8 5.8 L11.8 3.2 V10.4 L5.2 13.6 Z" fill="#fbfdfd"/><path d="M0.6 3.2 L6.8 0.6 L11.8 3.2 V10.4 L5.2 13.6 L1 11.4 Z M0.6 3.2 L4.8 5.8 L11.8 3.2 M4.8 5.8 L5.2 13.6" fill="none" stroke="#1c3a44" stroke-width="1" stroke-linejoin="round"/><rect x="10.6" y="9.6" width="2.2" height="2.2" fill="#1c2c34"/></svg>
<div class="b" style="left:26.0px;top:236.3px;width:141.4px;height:16.6px;background:#fff;border:1px solid #bfc4c8;box-sizing:border-box;"></div>
<div class="b" style="left:26.6px;top:237.0px;width:8.0px;height:15.2px;background:#4da3f3;"></div>
<span class="t" id="t51" style="left:36.2px;top:239.29px;font-size:8.30px;color:#1a1a1a;letter-spacing:-0.107px;">Face&lt;2&gt;</span>
<div class="b" style="left:6.0px;top:257.4px;width:17.0px;height:17.0px;background:#c3c8cc;border:1px solid #6f767c;box-sizing:border-box;"></div>
<svg class="b" style="left:6.0px;top:257.4px;" width="17" height="17" viewBox="0 0 17 17"><path d="M2.6 4.6 L11.6 14.4 M5.6 2.6 L14.6 12.4" stroke="#24465a" stroke-width="1.3"/></svg>
<span class="t" id="t52" style="left:26.6px;top:261.99px;font-size:8.30px;color:#555b60;letter-spacing:-0.134px;">Parallel</span>
<div class="b" style="left:6.0px;top:277.4px;width:17.0px;height:17.0px;background:#fcfcfc;border:1px solid #bcc6cc;box-sizing:border-box;"></div>
<svg class="b" style="left:6.0px;top:277.4px;" width="17" height="17" viewBox="0 0 17 17"><path d="M8.5 3 V13.4 M2.6 13.6 H14.4" stroke="#2a5a70" stroke-width="1.3"/></svg>
<span class="t" id="t53" style="left:26.6px;top:282.09px;font-size:8.30px;color:#555b60;letter-spacing:0.031px;">Perpendicular</span>
<div class="b" style="left:6.0px;top:297.4px;width:17.0px;height:17.0px;background:#fcfcfc;border:1px solid #bcc6cc;box-sizing:border-box;"></div>
<svg class="b" style="left:6.0px;top:297.4px;" width="17" height="17" viewBox="0 0 17 17"><path d="M2.4 13.4 L10.2 4.6 M9 6 L13.6 14.4 M9.2 5.6 L11.6 2.6" fill="none" stroke="#24465a" stroke-width="1.2"/></svg>
<span class="t" id="t54" style="left:26.6px;top:302.19px;font-size:8.30px;color:#555b60;letter-spacing:0.138px;">Coincident</span>
<div class="b" style="left:6.0px;top:317.8px;width:17.0px;height:17.0px;background:#fcfcfc;border:1px solid #bcc6cc;box-sizing:border-box;"></div>
<svg class="b" style="left:6.0px;top:317.8px;" width="17" height="17" viewBox="0 0 17 17"><path d="M3.6 3 V13.4 H14" fill="none" stroke="#1d3d50" stroke-width="1.4"/><path d="M5 5.4 C9 5.4 11 8 11 11.6 M9.2 9.8 L11 12 L12.8 9.8" fill="none" stroke="#111" stroke-width="1.3"/><path d="M11.6 3 v2.6 M13.4 3 v2.6" stroke="#333" stroke-width="0.8"/></svg>
<div class="b" style="left:26.0px;top:318.6px;width:127.6px;height:15.4px;background:#f8f8f8;border:1px solid #cfcfcf;box-sizing:border-box;"></div>
<span class="t" id="t55" style="left:28.2px;top:321.09px;font-size:8.30px;color:#b0b0b0;letter-spacing:-0.026px;">60.00deg</span>
<svg class="b" style="left:156.5px;top:319.1px;" width="11" height="7" viewBox="0 0 11 7"><path d="M1 6 V3.4 C1 1.6 10 1.6 10 3.4 V6 Z" fill="#f0f0f0" stroke="#d6d6d6" stroke-width="0.8"/><path d="M4 4.6 L5.5 3.2 L7 4.6" fill="none" stroke="#d0d0d0" stroke-width="0.8"/></svg><svg class="b" style="left:156.5px;top:326.6px;" width="11" height="7" viewBox="0 0 11 7"><path d="M1 1 V3.6 C1 5.4 10 5.4 10 3.6 V1 Z" fill="#f0f0f0" stroke="#d6d6d6" stroke-width="0.8"/><path d="M4 2.4 L5.5 3.8 L7 2.4" fill="none" stroke="#d0d0d0" stroke-width="0.8"/></svg>
<div class="b" style="left:6.0px;top:337.8px;width:17.0px;height:17.0px;background:#fcfcfc;border:1px solid #bcc6cc;box-sizing:border-box;"></div>
<svg class="b" style="left:6.0px;top:337.8px;" width="17" height="17" viewBox="0 0 17 17"><path d="M3 8 L8.6 2.6 L14.4 8 M4.6 7 V13 H12.8 V7" fill="none" stroke="#222" stroke-width="1.1"/><path d="M1.6 9.4 L4.4 12.4 M1.6 9.4 l0.4 2 M1.6 9.4 l2 0.2" stroke="#222" stroke-width="0.9"/><text x="6.2" y="12.4" font-family="Liberation Sans, sans-serif" font-size="5" font-weight="bold" fill="#1d4f78">DL</text></svg>
<div class="b" style="left:26.0px;top:338.8px;width:127.6px;height:15.4px;background:#f8f8f8;border:1px solid #cfcfcf;box-sizing:border-box;"></div>
<span class="t" id="t56" style="left:28.6px;top:341.19px;font-size:8.30px;color:#b0b0b0;letter-spacing:-0.025px;">10.000mm</span>
<svg class="b" style="left:156.5px;top:339.3px;" width="11" height="7" viewBox="0 0 11 7"><path d="M1 6 V3.4 C1 1.6 10 1.6 10 3.4 V6 Z" fill="#f0f0f0" stroke="#d6d6d6" stroke-width="0.8"/><path d="M4 4.6 L5.5 3.2 L7 4.6" fill="none" stroke="#d0d0d0" stroke-width="0.8"/></svg><svg class="b" style="left:156.5px;top:346.8px;" width="11" height="7" viewBox="0 0 11 7"><path d="M1 1 V3.6 C1 5.4 10 5.4 10 3.6 V1 Z" fill="#f0f0f0" stroke="#d6d6d6" stroke-width="0.8"/><path d="M4 2.4 L5.5 3.8 L7 2.4" fill="none" stroke="#d0d0d0" stroke-width="0.8"/></svg>
<div class="b" style="left:6.0px;top:358.0px;width:17.0px;height:17.0px;background:#fcfcfc;border:1px solid #bcc6cc;box-sizing:border-box;"></div>
<svg class="b" style="left:6.0px;top:358.0px;" width="17" height="17" viewBox="0 0 17 17"><path d="M3 5 H14 M3 8.5 H14 M3 12 H14" stroke="#2a4a5c" stroke-width="1.3"/></svg>
<span class="t" id="t57" style="left:26.6px;top:362.79px;font-size:8.30px;color:#555b60;letter-spacing:0.077px;">Mid Plane</span>
<div class="b" style="left:3.0px;top:383.0px;width:167.5px;height:1.0px;background:#c6c6c6;"></div>
<span class="t" id="t58" style="left:6.0px;top:384.71px;font-size:8.50px;color:#3a3a3a;letter-spacing:-0.136px;font-weight:bold;">Second Reference</span>
<svg class="b" style="left:156.0px;top:386.6px;" width="9" height="6" viewBox="0 0 9 6"><path d="M1 5 L4.5 1.2 L8 5" fill="none" stroke="#777" stroke-width="1.2"/></svg>
<svg class="b" style="left:7.8px;top:403.2px;" width="14" height="15" viewBox="0 0 14 15"><path d="M0.6 3.2 L6.8 0.6 L11.8 3.2 L4.8 5.8 Z" fill="#b9dede"/><path d="M0.6 3.2 L4.8 5.8 L5.2 13.6 L1 11.4 Z" fill="#dceff0"/><path d="M2.4 4.6 L3.8 5.4 L4.2 12.8 L2.8 12 Z" fill="#8cc4c8"/><path d="M4.8 5.8 L11.8 3.2 V10.4 L5.2 13.6 Z" fill="#fbfdfd"/><path d="M0.6 3.2 L6.8 0.6 L11.8 3.2 V10.4 L5.2 13.6 L1 11.4 Z M0.6 3.2 L4.8 5.8 L11.8 3.2 M4.8 5.8 L5.2 13.6" fill="none" stroke="#1c3a44" stroke-width="1" stroke-linejoin="round"/><rect x="10.6" y="9.6" width="2.2" height="2.2" fill="#1c2c34"/></svg>
<div class="b" style="left:26.0px;top:400.8px;width:141.4px;height:17.0px;background:#fff;border:1px solid #bfc4c8;box-sizing:border-box;"></div>
<div class="b" style="left:26.6px;top:401.4px;width:8.0px;height:15.8px;background:#f77fc0;"></div>
<span class="t" id="t59" style="left:36.2px;top:404.59px;font-size:8.30px;color:#1a1a1a;letter-spacing:0.130px;">Vertex&lt;1&gt;</span>
<div class="b" style="left:6.0px;top:422.8px;width:17.0px;height:17.0px;background:#c3c8cc;border:1px solid #6f767c;box-sizing:border-box;"></div>
<svg class="b" style="left:6.0px;top:422.8px;" width="17" height="17" viewBox="0 0 17 17"><path d="M2.4 13.4 L10.2 4.6 M9 6 L13.6 14.4 M9.2 5.6 L11.6 2.6" fill="none" stroke="#24465a" stroke-width="1.2"/></svg>
<span class="t" id="t60" style="left:26.6px;top:426.59px;font-size:8.30px;color:#555b60;letter-spacing:0.138px;">Coincident</span>
<div class="b" style="left:6.0px;top:442.6px;width:17.0px;height:17.0px;background:#fcfcfc;border:1px solid #bcc6cc;box-sizing:border-box;"></div>
<svg class="b" style="left:6.0px;top:442.6px;" width="17" height="17" viewBox="0 0 17 17"><circle cx="8.5" cy="4" r="1.8" fill="none" stroke="#222" stroke-width="1"/><path d="M8.5 5.8 V12" stroke="#222" stroke-width="1.1"/><path d="M3 12 L6 9.8 H11.6 L14 12 L11 14.2 H5.4 Z" fill="#a8d4e4" stroke="#2a6a88" stroke-width="0.8"/></svg>
<span class="t" id="t61" style="left:26.6px;top:447.09px;font-size:8.30px;color:#555b60;letter-spacing:0.110px;">Project</span>
<div class="b" style="left:6.0px;top:462.4px;width:17.0px;height:17.0px;background:#fcfcfc;border:1px solid #bcc6cc;box-sizing:border-box;"></div>
<svg class="b" style="left:6.0px;top:462.4px;" width="17" height="17" viewBox="0 0 17 17"><path d="M2.4 5 L5.6 3 H11 V11.4 L8 13.6 H2.4 Z" fill="#cfe4ec" stroke="#1d3d50" stroke-width="1"/><path d="M8 5.6 V13.6 M2.4 5 H8 L11 3" fill="none" stroke="#1d3d50" stroke-width="0.8"/><path d="M12.4 4.4 V12.4 M14.4 6 V13.4" stroke="#111" stroke-width="1.1"/><path d="M4 14.6 H10 M8.4 13.2 L10.2 14.6 L8.4 16" fill="none" stroke="#111" stroke-width="0.9"/></svg>
<div class="b" style="left:26.0px;top:463.8px;width:127.6px;height:15.0px;background:#f8f8f8;border:1px solid #cfcfcf;box-sizing:border-box;"></div>
<span class="t" id="t62" style="left:28.6px;top:466.49px;font-size:8.30px;color:#b0b0b0;">0</span>
<svg class="b" style="left:156.5px;top:464.1px;" width="11" height="7" viewBox="0 0 11 7"><path d="M1 6 V3.4 C1 1.6 10 1.6 10 3.4 V6 Z" fill="#f0f0f0" stroke="#d6d6d6" stroke-width="0.8"/><path d="M4 4.6 L5.5 3.2 L7 4.6" fill="none" stroke="#d0d0d0" stroke-width="0.8"/></svg><svg class="b" style="left:156.5px;top:471.6px;" width="11" height="7" viewBox="0 0 11 7"><path d="M1 1 V3.6 C1 5.4 10 5.4 10 3.6 V1 Z" fill="#f0f0f0" stroke="#d6d6d6" stroke-width="0.8"/><path d="M4 2.4 L5.5 3.8 L7 2.4" fill="none" stroke="#d0d0d0" stroke-width="0.8"/></svg>
<div class="b" style="left:3.0px;top:487.0px;width:167.5px;height:1.0px;background:#c6c6c6;"></div>
<span class="t" id="t63" style="left:6.0px;top:489.21px;font-size:8.50px;color:#3a3a3a;letter-spacing:-0.075px;font-weight:bold;">Third Reference</span>
<svg class="b" style="left:156.0px;top:491.2px;" width="9" height="6" viewBox="0 0 9 6"><path d="M1 5 L4.5 1.2 L8 5" fill="none" stroke="#777" stroke-width="1.2"/></svg>
<svg class="b" style="left:7.8px;top:507.8px;" width="14" height="15" viewBox="0 0 14 15"><path d="M0.6 3.2 L6.8 0.6 L11.8 3.2 L4.8 5.8 Z" fill="#b9dede"/><path d="M0.6 3.2 L4.8 5.8 L5.2 13.6 L1 11.4 Z" fill="#dceff0"/><path d="M2.4 4.6 L3.8 5.4 L4.2 12.8 L2.8 12 Z" fill="#8cc4c8"/><path d="M4.8 5.8 L11.8 3.2 V10.4 L5.2 13.6 Z" fill="#fbfdfd"/><path d="M0.6 3.2 L6.8 0.6 L11.8 3.2 V10.4 L5.2 13.6 L1 11.4 Z M0.6 3.2 L4.8 5.8 L11.8 3.2 M4.8 5.8 L5.2 13.6" fill="none" stroke="#1c3a44" stroke-width="1" stroke-linejoin="round"/><rect x="10.6" y="9.6" width="2.2" height="2.2" fill="#1c2c34"/></svg>
<div class="b" style="left:26.0px;top:505.8px;width:141.4px;height:17.0px;background:#c4e0fa;border:1px solid #4aa0dc;box-sizing:border-box;"></div>
<div class="b" style="left:26.6px;top:506.4px;width:8.2px;height:15.8px;background:#6a10f8;"></div>
<div class="b" style="left:3.0px;top:532.0px;width:167.5px;height:1.0px;background:#c6c6c6;"></div>
<span class="t" id="t64" style="left:6.0px;top:533.71px;font-size:8.50px;color:#3a3a3a;letter-spacing:-0.073px;font-weight:bold;">Options</span>
<svg class="b" style="left:156.0px;top:535.8px;" width="9" height="6" viewBox="0 0 9 6"><path d="M1 5 L4.5 1.2 L8 5" fill="none" stroke="#777" stroke-width="1.2"/></svg>
<div class="b" style="left:26.0px;top:549.8px;width:8.8px;height:8.8px;background:#fff;border:1px solid #7d8a94;box-sizing:border-box;"></div>
<span class="t" id="t65" style="left:38.2px;top:549.69px;font-size:8.30px;color:#555b60;letter-spacing:0.123px;">Flip normal</span>
<svg class="b" style="left:173.0px;top:388.0px;" width="8" height="29" viewBox="0 0 8 29"><path d="M0.5 0.9 H6.6 V27.6 H0.5" fill="#f6f6f6" stroke="#9c9c9c" stroke-width="0.9"/><path d="M0.5 1.4 V27.2" stroke="#f6f6f6" stroke-width="1.2"/><circle cx="3.4" cy="14.4" r="1.5" fill="none" stroke="#8e8e8e" stroke-width="0.8"/></svg>
<svg class="b" style="left:648.5px;top:87.5px;" width="14" height="14" viewBox="0 0 14 14"><circle cx="9" cy="5" r="3.8" fill="#dfe6ec" stroke="#6f8fae" stroke-width="1.4"/><path d="M6.2 7.8 L1.4 12.6" stroke="#6f8fae" stroke-width="2.2" stroke-linecap="round"/><path d="M9 3 V7 M7 5 H11" stroke="#fff" stroke-width="1.2"/></svg>
<svg class="b" style="left:667.0px;top:87.5px;" width="14" height="14" viewBox="0 0 14 14"><circle cx="8.6" cy="5.6" r="3.8" fill="#e6eaee" stroke="#6f8fae" stroke-width="1.2"/><path d="M5.8 8.4 L1.2 13" stroke="#6f8fae" stroke-width="2.2" stroke-linecap="round"/><path d="M4.4 1 H13.4 V10" fill="none" stroke="#555" stroke-width="1" stroke-dasharray="1.6 1.4"/></svg>
<svg class="b" style="left:686.0px;top:87.5px;" width="15" height="14" viewBox="0 0 15 14"><path d="M1.6 10.4 L9.6 1.6 L12.6 3.4 L5.6 12.6 Z" fill="#e8ecf0" stroke="#8e9aa6" stroke-width="1.1"/><ellipse cx="3.6" cy="11.4" rx="2.2" ry="1.6" fill="#d4dae0" stroke="#8e9aa6" stroke-width="0.9"/><path d="M7.4 10.8 H13 M9.6 8.6 L7.2 10.8 L9.6 13" fill="none" stroke="#4a84b8" stroke-width="1.4"/></svg>
<svg class="b" style="left:704.5px;top:88.0px;" width="14" height="13" viewBox="0 0 14 13"><path d="M1.4 4.6 L5.6 2.6 V10.6 L1.4 12.4 Z M6.8 2.6 L12.6 1 V9 L6.8 10.8 Z" fill="#e9e9e9" stroke="#dadada" stroke-width="0.8"/></svg>
<svg class="b" style="left:722.5px;top:87.5px;" width="15" height="14" viewBox="0 0 15 14"><path d="M1.4 9.6 L9.4 1.2 L12.6 3 L4.6 11.6 Z" fill="#d9dde2" stroke="#8a929a" stroke-width="0.9"/><path d="M4.4 7 L9.6 1.6 L11.4 2.6 L6.4 8.2 Z" fill="#ecc030"/><path d="M8 13.4 L10.6 6.4 L13.6 13.4 M9 11 H12.4" fill="none" stroke="#3f7cb0" stroke-width="1.5"/><path d="M2 11.4 L6 12.6" stroke="#a08a70" stroke-width="1.6"/></svg>
<svg class="b" style="left:742.0px;top:87.5px;" width="15" height="14" viewBox="0 0 15 14"><path d="M1.2 4 L4.2 1.2 H13.6 V10.2 L10.6 13 H1.2 Z" fill="#e4e9ee" stroke="#4a5a68" stroke-width="1"/><path d="M1.2 4 H10.6 V13 M10.6 4 L13.6 1.2 M7.4 1.2 V4 M10.6 8.4 L13.6 6" fill="none" stroke="#4a5a68" stroke-width="0.9"/><rect x="1.8" y="4.6" width="8.2" height="7.8" fill="#7db6dc"/></svg>
<svg class="b" style="left:760.3px;top:94.2px;" width="3.4" height="2.2" viewBox="0 0 3.4 2.2"><path d="M0 0 H3.4 L1.7 1.7 Z" fill="#8a8a8a"/></svg>
<svg class="b" style="left:771.0px;top:87.5px;" width="14" height="14" viewBox="0 0 14 14"><path d="M1.4 3 L6 1 L12.4 2.4 V10.6 L6.6 13 L1.4 11 Z" fill="#dbe9f2" stroke="#3f6a8c" stroke-width="1"/><path d="M1.4 3 L6.6 4.8 V13 Z" fill="#5a9cc8"/><path d="M6.6 4.8 L12.4 2.4 V10.6 L6.6 13 Z" fill="#cfe4f0"/><path d="M1.4 3 L6.6 4.8 L12.4 2.4 M6.6 4.8 V13" fill="none" stroke="#3f6a8c" stroke-width="0.8"/></svg>
<svg class="b" style="left:789.6px;top:94.2px;" width="3.4" height="2.2" viewBox="0 0 3.4 2.2"><path d="M0 0 H3.4 L1.7 1.7 Z" fill="#8a8a8a"/></svg>
<svg class="b" style="left:799.5px;top:88.5px;" width="15" height="12" viewBox="0 0 15 12"><path d="M0.8 6 C4 0.6 11 0.6 14.2 6 C11 11 4 11 0.8 6 Z" fill="#f2f2f2" stroke="#9a9a9a" stroke-width="1"/><circle cx="7.4" cy="5.8" r="3" fill="#555"/><path d="M7.4 0.6 V11.4" stroke="#bbb" stroke-width="0.7"/></svg>
<svg class="b" style="left:818.3px;top:94.2px;" width="3.4" height="2.2" viewBox="0 0 3.4 2.2"><path d="M0 0 H3.4 L1.7 1.7 Z" fill="#8a8a8a"/></svg>
<svg class="b" style="left:828.0px;top:87.5px;" width="14" height="14" viewBox="0 0 14 14"><circle cx="6" cy="5.6" r="4.6" fill="#ebebeb" stroke="#dcdcdc" stroke-width="0.8"/><circle cx="9.8" cy="7.4" r="3" fill="#efefef" stroke="#dcdcdc" stroke-width="0.8"/><path d="M5.6 10 L6.4 13.4" stroke="#dcdcdc" stroke-width="1.2"/></svg>
<svg class="b" style="left:846.0px;top:87.5px;" width="15" height="14" viewBox="0 0 15 14"><circle cx="7.4" cy="5.6" r="4.8" fill="#ebebeb" stroke="#dcdcdc" stroke-width="0.8"/><path d="M0.8 13 L4 8.6 H11 L14.2 13 Z" fill="#e4e4e4" stroke="#dadada" stroke-width="0.7"/></svg>
<svg class="b" style="left:865.3px;top:94.2px;" width="3.4" height="2.2" viewBox="0 0 3.4 2.2"><path d="M0 0 H3.4 L1.7 1.7 Z" fill="#8a8a8a"/></svg>
<svg class="b" style="left:875.0px;top:88.0px;" width="15" height="13" viewBox="0 0 15 13"><rect x="1" y="0.8" width="13" height="8.6" fill="#ececec" stroke="#555" stroke-width="1.1"/><path d="M7.5 9.4 V11.6 M4.6 12 H10.4" stroke="#555" stroke-width="1.2"/></svg>
<svg class="b" style="left:893.8px;top:94.2px;" width="3.4" height="2.2" viewBox="0 0 3.4 2.2"><path d="M0 0 H3.4 L1.7 1.7 Z" fill="#8a8a8a"/></svg>
<svg class="b" style="left:177.5px;top:107.5px;" width="5" height="6" viewBox="0 0 5 6"><path d="M1 0.8 L4 3 L1 5.2 Z" fill="#222"/></svg>
<svg class="b" style="left:190.2px;top:103.6px;" width="13" height="14" viewBox="0 0 13 14"><path d="M0.8 4.2 L3.4 0.9 L8.4 1.3 L9.2 4.9 L12.2 6.3 V9.8 L9 13 L0.6 7.6 Z" fill="#e6c022" stroke="#8a6e0c" stroke-width="0.9" stroke-linejoin="round"/><path d="M1.2 4.3 L3.5 1.4 L8 1.7 L5.9 4.8 Z" fill="#f8e463"/><path d="M5.9 7.6 L9 5.4 L11.8 6.6 L9 9.2 Z" fill="#f8e463"/><path d="M5.9 4.8 V7.6 L9 9.2 V12.6 M5.9 4.8 L8.4 1.5" fill="none" stroke="#a8860e" stroke-width="0.7"/></svg>
<span class="t" id="t66" style="left:206.0px;top:106.49px;font-size:8.30px;color:#222;letter-spacing:0.107px;">Planes (Default) &lt;&lt;Defaul...</span>
<svg class="b" style="left:400.0px;top:190.0px;" width="640" height="500" viewBox="400 190 640 500"><defs><linearGradient id="gcyl" gradientUnits="userSpaceOnUse" x1="958" y1="0" x2="996" y2="0"><stop offset="0" stop-color="#50525e"/><stop offset="0.45" stop-color="#5b5e6c"/><stop offset="1" stop-color="#83879a"/></linearGradient><linearGradient id="gtop" gradientUnits="userSpaceOnUse" x1="560" y1="250" x2="800" y2="480"><stop offset="0" stop-color="#969bb4"/><stop offset="1" stop-color="#9a9fb8"/></linearGradient><linearGradient id="gstrip" gradientUnits="userSpaceOnUse" x1="956" y1="0" x2="971" y2="0"><stop offset="0" stop-color="#4d7eb8"/><stop offset="0.55" stop-color="#3a6ea9"/><stop offset="0.88" stop-color="#416fa6"/><stop offset="1" stop-color="#5b7194"/></linearGradient><clipPath id="ctop"><path d="M446.0 385.5 L729.2 236.6 L732.4 234.7 L735.8 232.8 L739.3 231.1 L743.0 229.4 L746.8 227.8 L750.7 226.2 L754.7 224.8 L758.9 223.5 L763.1 222.2 L767.5 221.0 L772.0 219.9 L776.6 218.9 L781.2 218.0 L786.0 217.2 L790.8 216.5 L795.7 215.9 L800.7 215.4 L805.7 215.0 L810.8 214.7 L815.9 214.5 L821.0 214.4 L826.2 214.3 L831.5 214.4 L836.7 214.6 L842.0 214.9 L847.2 215.3 L852.5 215.7 L857.8 216.3 L863.0 217.0 L868.2 217.8 L873.4 218.6 L878.6 219.6 L883.7 220.6 L888.8 221.8 L893.9 223.0 L898.8 224.3 L903.7 225.8 L908.6 227.3 L913.3 228.8 L918.0 230.5 L922.6 232.2 L927.1 234.0 L931.4 235.9 L935.7 237.9 L939.9 239.9 L943.9 242.0 L947.8 244.2 L951.6 246.4 L955.3 248.7 L958.8 251.0 L962.2 253.4 L965.4 255.9 L968.5 258.4 L971.5 260.9 L974.2 263.5 L976.8 266.1 L979.3 268.7 L981.6 271.4 L983.7 274.1 L985.6 276.8 L987.4 279.6 L989.0 282.3 L990.4 285.1 L991.6 287.9 L992.6 290.7 L993.5 293.5 L994.1 296.3 L994.6 299.0 L994.9 301.8 L995.0 304.6 L994.9 307.3 L994.6 310.1 L994.1 312.8 L993.5 315.4 L992.7 318.1 L991.6 320.7 L990.4 323.3 L989.0 325.9 L987.5 328.4 L985.7 330.8 L983.8 333.2 L981.7 335.6 L979.4 337.9 L977.0 340.1 L974.4 342.3 L971.6 344.4 L968.7 346.5 L965.6 348.5 L962.4 350.4 L959.0 352.2 L675.6 528.1 Z"/></clipPath><clipPath id="cright"><path d="M675.6 528.1 L959.0 352.2 L949.4 479.3 L675.9 663.0 Z"/></clipPath><clipPath id="ccyl"><path d="M959.0 352.2 L959.0 352.2 L961.1 351.1 L963.2 349.9 L965.2 348.7 L967.1 347.5 L969.0 346.2 L970.9 345.0 L972.6 343.7 L974.3 342.3 L976.0 341.0 L977.6 339.6 L979.1 338.2 L980.5 336.8 L981.9 335.4 L983.2 333.9 L984.5 332.4 L985.6 330.9 L986.8 329.4 L987.8 327.8 L988.8 326.3 L989.7 324.7 L990.5 323.1 L991.3 321.5 L992.0 319.9 L992.6 318.3 L993.2 316.6 L993.6 314.9 L994.0 313.3 L994.4 311.6 L994.6 309.9 L994.8 308.2 L987.2 398 C986 418 984.6 432 981.6 440.2 C979 448 973 457.6 967.5 464.3 C962 470.4 955.6 475.6 949.4 479.3 Z"/></clipPath></defs><path d="M446.0 385.5 L729.2 236.6 L732.4 234.7 L735.8 232.8 L739.3 231.1 L743.0 229.4 L746.8 227.8 L750.7 226.2 L754.7 224.8 L758.9 223.5 L763.1 222.2 L767.5 221.0 L772.0 219.9 L776.6 218.9 L781.2 218.0 L786.0 217.2 L790.8 216.5 L795.7 215.9 L800.7 215.4 L805.7 215.0 L810.8 214.7 L815.9 214.5 L821.0 214.4 L826.2 214.3 L831.5 214.4 L836.7 214.6 L842.0 214.9 L847.2 215.3 L852.5 215.7 L857.8 216.3 L863.0 217.0 L868.2 217.8 L873.4 218.6 L878.6 219.6 L883.7 220.6 L888.8 221.8 L893.9 223.0 L898.8 224.3 L903.7 225.8 L908.6 227.3 L913.3 228.8 L918.0 230.5 L922.6 232.2 L927.1 234.0 L931.4 235.9 L935.7 237.9 L939.9 239.9 L943.9 242.0 L947.8 244.2 L951.6 246.4 L955.3 248.7 L958.8 251.0 L962.2 253.4 L965.4 255.9 L968.5 258.4 L971.5 260.9 L974.2 263.5 L976.8 266.1 L979.3 268.7 L981.6 271.4 L983.7 274.1 L985.6 276.8 L987.4 279.6 L989.0 282.3 L990.4 285.1 L991.6 287.9 L992.6 290.7 L993.5 293.5 L994.1 296.3 L994.6 299.0 L994.9 301.8 L995.0 304.6 L994.9 307.3 L994.6 310.1 L994.1 312.8 L993.5 315.4 L992.7 318.1 L991.6 320.7 L990.4 323.3 L989.0 325.9 L987.5 328.4 L985.7 330.8 L983.8 333.2 L981.7 335.6 L979.4 337.9 L977.0 340.1 L974.4 342.3 L971.6 344.4 L968.7 346.5 L965.6 348.5 L962.4 350.4 L959.0 352.2 L675.6 528.1 Z" fill="url(#gtop)"/><path d="M675.6 528.1 L959.0 352.2 L949.4 479.3 L675.9 663.0 Z" fill="#51535f"/><path d="M959.0 352.2 L959.0 352.2 L961.1 351.1 L963.2 349.9 L965.2 348.7 L967.1 347.5 L969.0 346.2 L970.9 345.0 L972.6 343.7 L974.3 342.3 L976.0 341.0 L977.6 339.6 L979.1 338.2 L980.5 336.8 L981.9 335.4 L983.2 333.9 L984.5 332.4 L985.6 330.9 L986.8 329.4 L987.8 327.8 L988.8 326.3 L989.7 324.7 L990.5 323.1 L991.3 321.5 L992.0 319.9 L992.6 318.3 L993.2 316.6 L993.6 314.9 L994.0 313.3 L994.4 311.6 L994.6 309.9 L994.8 308.2 L987.2 398 C986 418 984.6 432 981.6 440.2 C979 448 973 457.6 967.5 464.3 C962 470.4 955.6 475.6 949.4 479.3 Z" fill="url(#gcyl)"/><path d="M719.3 224.1 L973.3 351.0 L961.1 492.6 L718.2 358.5 Z" fill="#5a9be0" fill-opacity="0.05" clip-path="url(#ctop)"/><path d="M719.3 224.1 L973.3 351.0 L961.1 492.6 L718.2 358.5 Z" fill="#5a9be0" fill-opacity="0.07" clip-path="url(#cright)"/><path d="M719.3 224.1 L734.4 231.6 C729 234.4 724 237.6 719.2 241 Z" fill="#a6c8e8"/><path d="M733.6 231.2 L973.3 351.0 L959.5 352.5 L746 245 L735.6 234.4 Z" fill="#668fc8"/><path d="M733.6 231.2 L973.3 351.0" stroke="#8fb6e2" stroke-width="0.9" fill="none"/><path d="M959.0 352.2 L973.3 351.0 L962.7 471 L955.6 475.6 L949.4 479.3 Z" fill="url(#gstrip)"/><path d="M944.8 483.6 L955.6 475.8 L962.7 471 L961.1 492.6 Z" fill="#8fb8df"/><path d="M962.7 471 L961.1 492.6 L944.8 483.6" stroke="#5b97d4" stroke-width="0.9" fill="none"/><path d="M446.0 385.5 L729.2 236.6 L732.4 234.7 L735.8 232.8 L739.3 231.1 L743.0 229.4 L746.8 227.8 L750.7 226.2 L754.7 224.8 L758.9 223.5 L763.1 222.2 L767.5 221.0 L772.0 219.9 L776.6 218.9 L781.2 218.0 L786.0 217.2 L790.8 216.5 L795.7 215.9 L800.7 215.4 L805.7 215.0 L810.8 214.7 L815.9 214.5 L821.0 214.4 L826.2 214.3 L831.5 214.4 L836.7 214.6 L842.0 214.9 L847.2 215.3 L852.5 215.7 L857.8 216.3 L863.0 217.0 L868.2 217.8 L873.4 218.6 L878.6 219.6 L883.7 220.6 L888.8 221.8 L893.9 223.0 L898.8 224.3 L903.7 225.8 L908.6 227.3 L913.3 228.8 L918.0 230.5 L922.6 232.2 L927.1 234.0 L931.4 235.9 L935.7 237.9 L939.9 239.9 L943.9 242.0 L947.8 244.2 L951.6 246.4 L955.3 248.7 L958.8 251.0 L962.2 253.4 L965.4 255.9 L968.5 258.4 L971.5 260.9 L974.2 263.5 L976.8 266.1 L979.3 268.7 L981.6 271.4 L983.7 274.1 L985.6 276.8 L987.4 279.6 L989.0 282.3 L990.4 285.1 L991.6 287.9 L992.6 290.7 L993.5 293.5 L994.1 296.3 L994.6 299.0 L994.9 301.8 L995.0 304.6 L994.9 307.3 L994.6 310.1 L994.1 312.8 L993.5 315.4 L992.7 318.1 L991.6 320.7 L990.4 323.3 L989.0 325.9 L987.5 328.4 L985.7 330.8 L983.8 333.2 L981.7 335.6 L979.4 337.9 L977.0 340.1 L974.4 342.3 L971.6 344.4 L968.7 346.5 L965.6 348.5 L962.4 350.4 L959.0 352.2" fill="none" stroke="#1c1e26" stroke-width="1"/><path d="M675.6 528.1 L959.0 352.2" fill="none" stroke="#1c1e26" stroke-width="1.1"/><path d="M994.8 308.2 L987.2 398 C986 418 984.6 432 981.6 440.2 C979 448 973 457.6 967.5 464.3 C962 470.4 955.6 475.6 949.4 479.3 L675.9 663.0" fill="none" stroke="#1c1e26" stroke-width="1.1"/><path d="M959.0 352.2 L949.4 479.3" fill="none" stroke="#0c0e14" stroke-width="1.1" stroke-dasharray="7 1.6"/><path d="M733.6 231.2 L719.3 224.1 L718.2 358.5 L833.5 422.2" fill="none" stroke="#5a8fd2" stroke-width="1.1"/><path d="M833.5 422.2 L944.8 483.6" fill="none" stroke="#3f6aa6" stroke-width="1.8" stroke-opacity="0.85"/><path d="M446.0 385.5 L675.6 528.1 L675.9 663.0 L454.9 514.4 Z" fill="#346ba3"/><path d="M446.0 385.5 L675.6 528.1 L675.9 663.0 L454.9 514.4 Z" fill="none" stroke="#62a1e3" stroke-width="1.7" stroke-linejoin="round"/><path d="M520.8 483.4 H525.2 M523 481.2 V485.6" stroke="#6aa2dc" stroke-width="0.7"/><circle cx="959.0" cy="352.4" r="2.8" fill="#050505"/><path d="M838 354.4 L835.6 353 L833 355.4 L831.2 354 L827 360.6 L834.4 361.2 L833.2 359 L836.6 358.6 Z" fill="#1212d6"/></svg>
<svg class="b" style="left:190.0px;top:650.0px;" width="40" height="46" viewBox="190 650 40 46"><path d="M202.7 679 V666" stroke="#1e7a1e" stroke-width="2"/><path d="M199 667.4 L202.7 662.4 L206.4 667.4 Z" fill="#1e7a1e"/><path d="M203 678.6 L213 673.6" stroke="#b02020" stroke-width="2"/><path d="M211.4 670.6 L218 671 L213.6 676 Z" fill="#b02020"/><path d="M203 679 L213.6 685.6" stroke="#1a1aa8" stroke-width="2.2"/><path d="M214.6 682.6 L218.6 688.6 L211.6 688 Z" fill="#2222c8"/><text x="200.4" y="659.6" font-family="Liberation Sans, sans-serif" font-size="5.6" fill="#2a6a2a">Y</text><text x="218.2" y="670.4" font-family="Liberation Sans, sans-serif" font-size="5.6" fill="#c86060">X</text><text x="217.8" y="692.4" font-family="Liberation Sans, sans-serif" font-size="5.6" fill="#222">Z</text></svg>
<svg class="b" style="left:1283.5px;top:90.0px;" width="10" height="11" viewBox="0 0 10 11"><rect x="0.8" y="0.8" width="8" height="9" fill="#fafafa" stroke="#9e9e9e" stroke-width="0.9"/><path d="M4.4 3.4 L2.2 5.3 L4.4 7.2 Z M4.6 3.4 V7.2" fill="#7a7a7a" stroke="#7a7a7a" stroke-width="0.5"/></svg>
<svg class="b" style="left:1302.0px;top:90.0px;" width="10" height="11" viewBox="0 0 10 11"><rect x="0.8" y="0.8" width="8" height="9" fill="#fafafa" stroke="#9e9e9e" stroke-width="0.9"/><path d="M5.4 3.4 L7.6 5.3 L5.4 7.2 Z M5.2 3.4 V7.2" fill="#7a7a7a" stroke="#7a7a7a" stroke-width="0.5"/></svg>
<div class="b" style="left:1322.5px;top:97.6px;width:6.0px;height:1.2px;background:#8a8a8a;"></div>
<svg class="b" style="left:1339.0px;top:89.5px;" width="12" height="11" viewBox="0 0 12 11"><path d="M3.4 3 V0.7 H10.6 V6.4 H8.2" fill="none" stroke="#9e9e9e" stroke-width="1"/><rect x="0.7" y="3.4" width="7.4" height="5.8" fill="none" stroke="#9e9e9e" stroke-width="1"/></svg>
<svg class="b" style="left:1358.5px;top:91.0px;" width="9" height="9" viewBox="0 0 9 9"><path d="M0.8 0.8 L7.6 7.6 M7.6 0.8 L0.8 7.6" stroke="#a4a4a4" stroke-width="1"/></svg>
<svg class="b" style="left:1300.0px;top:108.0px;" width="26" height="20" viewBox="1300 108 26 20"><path d="M1304.4 117.8 L1310.6 123.4 L1321.6 112.2" fill="none" stroke="#cde7c9" stroke-width="3.8"/></svg>
<svg class="b" style="left:1333.0px;top:128.0px;" width="22" height="22" viewBox="1333 128 22 22"><path d="M1338 133 L1350.6 145.2 M1350.6 133 L1338 145.2" stroke="#f7d0d0" stroke-width="4.6"/></svg>
<div class="b" style="left:1358.0px;top:120.0px;width:19.5px;height:17.4px;background:#ffffff;border:1px solid #a6a6a6;box-sizing:border-box;"></div>
<div class="b" style="left:1358.0px;top:136.6px;width:19.5px;height:18.2px;background:#d3d3d3;border:1px solid #a6a6a6;box-sizing:border-box;"></div>
<div class="b" style="left:1358.0px;top:154.0px;width:19.5px;height:18.2px;background:#d3d3d3;border:1px solid #a6a6a6;box-sizing:border-box;"></div>
<div class="b" style="left:1358.0px;top:171.4px;width:19.5px;height:18.2px;background:#d3d3d3;border:1px solid #a6a6a6;box-sizing:border-box;"></div>
<div class="b" style="left:1358.0px;top:188.8px;width:19.5px;height:18.2px;background:#d3d3d3;border:1px solid #a6a6a6;box-sizing:border-box;"></div>
<div class="b" style="left:1358.0px;top:206.2px;width:19.5px;height:18.0px;background:#d3d3d3;border:1px solid #a6a6a6;box-sizing:border-box;"></div>
<div class="b" style="left:1358.0px;top:120.0px;width:19.0px;height:1.0px;background:#707070;"></div>
<div class="b" style="left:1358.0px;top:120.0px;width:1.0px;height:104.0px;background:#8a8a8a;"></div>
<svg class="b" style="left:1360.4px;top:121.6px;" width="15" height="15" viewBox="0 0 15 15"><path d="M4 7.4 V13.4 H11.4 V7.4" fill="#fafafa" stroke="#4a4a4a" stroke-width="1.1"/><path d="M6.4 13.4 V9.4 H9 V13.4" fill="#fff" stroke="#4a4a4a" stroke-width="1"/><path d="M1.4 8 L7.7 2 L14 8" fill="none" stroke="#1f506e" stroke-width="2.3" stroke-linejoin="miter"/></svg>
<svg class="b" style="left:1361.0px;top:138.4px;" width="14" height="15" viewBox="0 0 14 15"><path d="M1.4 4.4 L5.4 1.4 L12 3 V11.4 L8.6 14 L1.4 12 Z" fill="#f4f4f4" stroke="#2a2a2a" stroke-width="0.9" stroke-linejoin="round"/><path d="M1.4 4.4 L8.6 6.2 L12 3 M8.6 6.2 V14 M3.8 5 V12.6 M6.2 5.6 V13.3 M3.4 2.9 L10.4 4.6 M5.4 1.4 L8.2 4" fill="none" stroke="#2a2a2a" stroke-width="0.8"/></svg>
<svg class="b" style="left:1360.4px;top:157.0px;" width="15" height="13" viewBox="0 0 15 13"><path d="M1 12 V1.6 H5.4 L6.8 3.2 H12 V5.4" fill="none" stroke="#333" stroke-width="1"/><path d="M1 12 L4 5.4 H14.4 L11.4 12 Z" fill="#fafafa" stroke="#333" stroke-width="1"/></svg>
<svg class="b" style="left:1360.8px;top:175.4px;" width="14" height="11" viewBox="0 0 14 11"><rect x="0.7" y="0.7" width="12.6" height="9.6" fill="#fbeeb0" stroke="#5a4608" stroke-width="1"/><rect x="1.4" y="1.4" width="11.2" height="8.2" fill="none" stroke="#e0b820" stroke-width="1"/><path d="M2.6 2.8 H8 M5.3 2.8 V7.6 M2.6 7.8 H8" stroke="#d8a810" stroke-width="1.5"/><path d="M9.4 1.4 V9.6" stroke="#5a4608" stroke-width="0.7"/><rect x="10" y="2.2" width="2.2" height="1.8" fill="#fff" stroke="#6a5208" stroke-width="0.5"/><rect x="10" y="5" width="2.2" height="1.4" fill="#777"/><rect x="10" y="7" width="2.2" height="2" fill="#fff" stroke="#6a5208" stroke-width="0.5"/></svg>
<svg class="b" style="left:1361.0px;top:190.6px;" width="13" height="13" viewBox="0 0 13 13"><defs><radialGradient id="gball" cx="0.36" cy="0.3" r="0.75"><stop offset="0" stop-color="#fff" stop-opacity="0.75"/><stop offset="0.45" stop-color="#fff" stop-opacity="0"/><stop offset="1" stop-color="#000" stop-opacity="0.28"/></radialGradient></defs><path d="M6.5 6.5 L6.5 0.8 A5.7 5.7 0 0 1 12.2 6.5 Z" fill="#c42a28"/><path d="M6.5 6.5 L12.2 6.5 A5.7 5.7 0 0 1 6.5 12.2 Z" fill="#d6cc3c"/><path d="M6.5 6.5 L6.5 12.2 A5.7 5.7 0 0 1 0.8 6.5 Z" fill="#30a044"/><path d="M6.5 6.5 L0.8 6.5 A5.7 5.7 0 0 1 6.5 0.8 Z" fill="#3a72cc"/><circle cx="6.5" cy="6.5" r="5.7" fill="url(#gball)"/></svg>
<svg class="b" style="left:1360.8px;top:208.2px;" width="14" height="14" viewBox="0 0 14 14"><rect x="0.8" y="0.8" width="12.4" height="12.4" fill="#eef2f4" stroke="#3c7088" stroke-width="1.2"/><rect x="0.8" y="0.8" width="12.4" height="2.4" fill="#4a8098"/><path d="M2.6 4.6 h2.6 v1.8 h-2.6 Z M2.6 7.4 h2.6 v1.8 h-2.6 Z M2.6 10.2 h2.6 v1.8 h-2.6 Z" fill="#1c3c4c"/><path d="M6.6 5.5 H11.8 M6.6 8.3 H11.8 M6.6 11.1 H11.8" stroke="#b4b4b4" stroke-width="1.3"/></svg>
<div class="b" style="left:0.0px;top:721.0px;width:1377.0px;height:12.0px;background:#f2f2f2;"></div>
<div class="b" style="left:0.0px;top:721.0px;width:1377.0px;height:1.0px;background:#b4b4b4;"></div>
<div class="b" style="left:0.0px;top:732.0px;width:1377.0px;height:1.0px;background:#8f8f8f;"></div>
<div class="b" style="left:0.0px;top:733.0px;width:1377.0px;height:13.0px;background:#f2f2f2;"></div>
<div class="b" style="left:1.5px;top:722.0px;width:46.5px;height:10.4px;background:#b4b4b4;"></div>
<div class="b" style="left:12.8px;top:722.0px;width:1.0px;height:10.0px;background:#a2a2a2;"></div>
<svg class="b" style="left:3.1px;top:723.2px;" width="9" height="8" viewBox="0 0 9 8"><path d="M2 1.4 V6.6 M6.6 1.4 L3 4 L6.6 6.6 Z" fill="#c8c8c8" stroke="#c8c8c8" stroke-width="0.8"/></svg>
<div class="b" style="left:24.4px;top:722.0px;width:1.0px;height:10.0px;background:#a2a2a2;"></div>
<svg class="b" style="left:14.7px;top:723.2px;" width="9" height="8" viewBox="0 0 9 8"><path d="M6 1.4 L2.4 4 L6 6.6 Z" fill="#c8c8c8" stroke="#c8c8c8" stroke-width="0.8"/></svg>
<div class="b" style="left:36.0px;top:722.0px;width:1.0px;height:10.0px;background:#a2a2a2;"></div>
<svg class="b" style="left:26.3px;top:723.2px;" width="9" height="8" viewBox="0 0 9 8"><path d="M2.6 1.4 L6.2 4 L2.6 6.6 Z" fill="#c8c8c8" stroke="#c8c8c8" stroke-width="0.8"/></svg>
<div class="b" style="left:47.6px;top:722.0px;width:1.0px;height:10.0px;background:#a2a2a2;"></div>
<svg class="b" style="left:37.9px;top:723.2px;" width="9" height="8" viewBox="0 0 9 8"><path d="M6.6 1.4 V6.6 M2 1.4 L5.6 4 L2 6.6 Z" fill="#c8c8c8" stroke="#c8c8c8" stroke-width="0.8"/></svg>
<div class="b" style="left:48.0px;top:721.0px;width:40.5px;height:11.6px;background:#ffffff;"></div>
<span class="t" id="t67" style="left:57.0px;top:722.20px;font-size:8.40px;color:#111;letter-spacing:0.079px;font-weight:bold;">Model</span>
<div class="b" style="left:88.2px;top:721.6px;width:49.2px;height:11.0px;background:#d0d0d0;border:1px solid #9a9a9a;box-sizing:border-box;"></div>
<span class="t" id="t68" style="left:96.6px;top:722.29px;font-size:8.30px;color:#222;letter-spacing:-0.188px;">3D Views</span>
<div class="b" style="left:136.6px;top:721.6px;width:78.2px;height:11.0px;background:#d0d0d0;border:1px solid #9a9a9a;box-sizing:border-box;"></div>
<span class="t" id="t69" style="left:144.6px;top:722.29px;font-size:8.30px;color:#222;letter-spacing:0.147px;">Motion Study 1</span>
<span class="t" id="t70" style="left:1.2px;top:735.19px;font-size:8.30px;color:#222;letter-spacing:-0.525px;">SOLIDWORKS</span>
<span class="t" id="t71" style="left:1172.4px;top:735.19px;font-size:8.30px;color:#222;letter-spacing:0.092px;">Editing Part</span>
<svg class="b" style="left:1236.5px;top:734.5px;" width="12" height="11" viewBox="0 0 12 11"><path d="M1 7.6 L4 2 L6 5.2 L7.6 3 L10 7.6 Z" fill="#e8b818" stroke="#7a5a08" stroke-width="0.6"/><path d="M6 6.4 L10.6 1.4 M10.6 1.4 l-2.4 0.4 M10.6 1.4 l-0.2 2.4" stroke="#111" stroke-width="1.2" fill="none"/><path d="M1.4 9.6 H9.6" stroke="#2060b0" stroke-width="1.6"/></svg>
<span class="t" id="t72" style="left:1301.2px;top:735.19px;font-size:8.30px;color:#b4b4b4;letter-spacing:0.047px;">MMGS</span>
<svg class="b" style="left:1340.0px;top:739.0px;" width="5" height="4" viewBox="0 0 5 4"><path d="M0.4 3 L2.5 0.6 L4.6 3 Z" fill="#8a8a8a"/></svg>
<svg class="b" style="left:1363.0px;top:734.6px;" width="13" height="11" viewBox="0 0 13 11"><path d="M1 4 L6.4 1 L12 3.6 L10.6 8.4 L5.4 10.4 L1.6 8 Z" fill="#e6e6e6" stroke="#333" stroke-width="0.9"/><path d="M4 4.4 L6.6 3 L9 4.6 L6.4 6.4 Z" fill="#fff" stroke="#333" stroke-width="0.7"/></svg>
<div class="b" style="left:1376.0px;top:84.0px;width:1.0px;height:36.0px;background:#2e2e2e;"></div>
<div class="b" style="left:1376.0px;top:224.0px;width:1.0px;height:498.0px;background:#2e2e2e;"></div>
</div></body></html>
